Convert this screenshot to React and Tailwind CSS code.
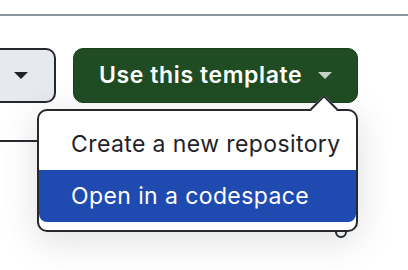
import { useState } from 'react';

function Caret({ className }) {
  return (
    <svg width="14" height="7" viewBox="0 0 14 7" className={className}>
      <path d="M0 0h14L7 7z" fill="currentColor" />
    </svg>
  );
}

export default function App() {
  const [active] = useState(1);
  const items = ['Create a new repository', 'Open in a codespace'];

  return (
    <div className="relative w-[408px] h-[270px] overflow-hidden bg-white font-['Inter','Liberation_Sans',sans-serif]">
      <div className="h-[14px]" />
      <div className="h-[2px] bg-[#8c959f]" />

      <div className="flex items-start gap-[17px] mt-[32px]">
        <button className="ml-[-40px] w-[96px] h-[55px] flex items-center justify-end pr-[26px] bg-[#e6e9ee] border-2 border-[#25292e] rounded-[10px] text-[#1f2328]">
          <Caret />
        </button>

        <div className="relative">
          <button className="w-[285px] h-[55px] flex items-center pl-[25px] gap-[16px] bg-[#1f4c23] border border-[#1a3f1e] rounded-[10px] text-white text-[23px] font-semibold tracking-[0.6px]">
            <span>Use this template</span>
            <Caret className="text-[#c4d1c5]" />
          </button>

          <div className="absolute left-[-36px] top-[61px] z-10 w-[321px] h-[123px] bg-white border-2 border-[#25292e] rounded-[10px] shadow-[0_8px_36px_rgba(66,74,83,0.18)]">
            <div className="absolute left-[275px] top-[-12px] w-[20px] h-[20px] rotate-45 bg-white border-t-2 border-l-2 border-[#25292e]" />
            <div className="relative pt-[7px] overflow-hidden rounded-[8px]">
              {items.map((label, i) => (
                <div
                  key={label}
                  className={`h-[52px] flex items-center pl-[32px] text-[23px] tracking-[0.4px] ${
                    i === active ? 'bg-[#1f4bb1] text-white' : 'text-[#1f2328]'
                  }`}
                >
                  {label}
                </div>
              ))}
            </div>
          </div>
        </div>
      </div>

      <div className="mt-[37px] w-[40px] h-[2px] bg-[#25292e]" />
      <div className="absolute left-[335px] top-[226px] w-[12px] h-[12px] rounded-full border-2 border-[#25292e]" />
    </div>
  );
}
